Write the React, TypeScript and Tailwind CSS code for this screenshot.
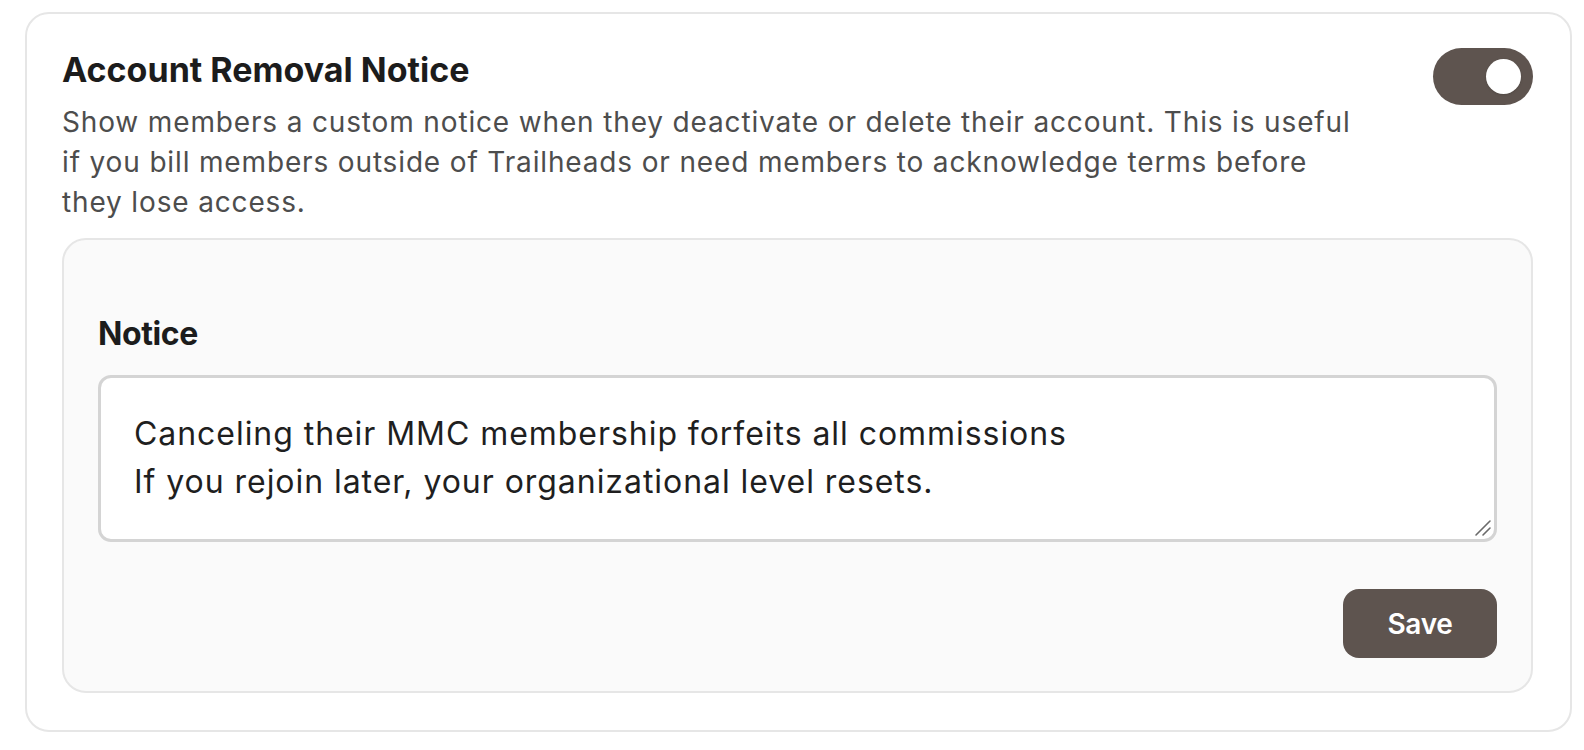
import { useState } from "react";

const notice =
  "Canceling their MMC membership forfeits all commissions\nIf you rejoin later, your organizational level resets.";

function Toggle({ on, onChange }: { on: boolean; onChange: (v: boolean) => void }) {
  return (
    <button
      type="button"
      role="switch"
      aria-checked={on}
      onClick={() => onChange(!on)}
      className={`mt-[6px] flex h-[57px] w-[100px] shrink-0 items-center rounded-full px-[12px] ${
        on ? "justify-end bg-[#5e544f]" : "justify-start bg-[#d4d4d4]"
      }`}
    >
      <span className="size-[35px] rounded-full bg-white shadow-sm" />
    </button>
  );
}

export default function App() {
  const [enabled, setEnabled] = useState(true);
  const [text, setText] = useState(notice);

  return (
    <div className="min-h-[750px] bg-white pt-[12px] pl-[25px] pr-[12px] font-['Inter',sans-serif]">
      <div className="rounded-[24px] border-2 border-[#e6e6e6] bg-white pt-[28px] pb-[37px] pl-[35px] pr-[37px]">
        <div className="flex items-start justify-between gap-6">
          <div>
            <h2 className="text-[34px] leading-[56px] font-bold text-[#1c1c1c]">Account Removal Notice</h2>
            <p className="mt-[4px] max-w-[1300px] text-[28px] leading-[40px] tracking-[0.85px] text-[#4d4d4d]">
              Show members a custom notice when they deactivate or delete their account. This is useful if you
              bill members outside of Trailheads or need members to acknowledge terms before they lose access.
            </p>
          </div>
          <Toggle on={enabled} onChange={setEnabled} />
        </div>

        <div className="mt-[16px] rounded-[24px] border-2 border-[#e6e6e6] bg-[#fafafa] pt-[70px] pb-[33px] px-[34px]">
          <label htmlFor="notice" className="block text-[32px] leading-[48px] font-bold tracking-[-0.4px] text-[#1c1c1c]">
            Notice
          </label>
          <div className="relative mt-[17px]">
            <textarea
              id="notice"
              value={text}
              onChange={(e) => setText(e.target.value)}
              className="block h-[167px] w-full resize-none rounded-[13px] border-[3px] border-[#d4d4d4] bg-white px-[33px] py-[32px] text-[32px] leading-[48px] tracking-[0.95px] text-[#1f1f1f] outline-none"
            />
            {/* resize grip */}
            <svg
              className="pointer-events-none absolute right-[5px] bottom-[5px] size-[18px]"
              viewBox="0 0 18 18"
              fill="none"
              stroke="#6b6b6b"
              strokeWidth="1.6"
              strokeLinecap="round"
            >
              <path d="M16 2L2 16" />
              <path d="M16 9L9 16" />
            </svg>
          </div>
          <div className="mt-[47px] flex justify-end">
            <button
              type="button"
              className="h-[69px] w-[154px] rounded-[16px] bg-[#5e544f] text-[28px] font-semibold tracking-[-0.3px] text-white"
            >
              Save
            </button>
          </div>
        </div>
      </div>
    </div>
  );
}
